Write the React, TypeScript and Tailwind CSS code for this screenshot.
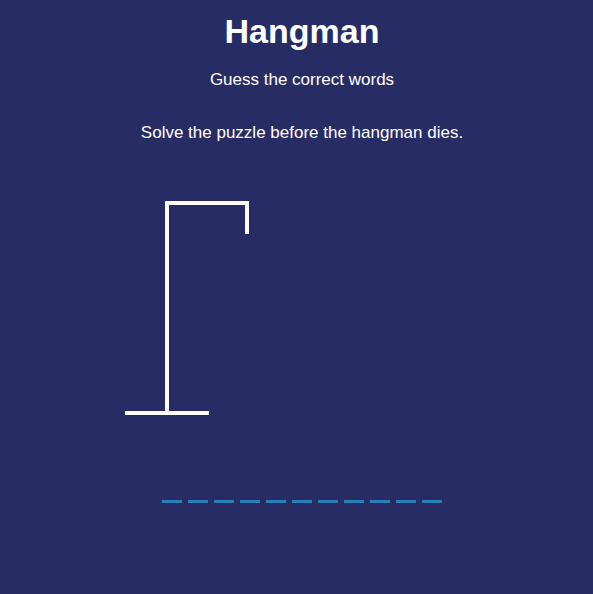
export default function App() {
  const letters = Array.from({ length: 11 });
  return (
    <div
      className="w-full h-[594px] overflow-hidden bg-[#282c65] text-white flex flex-col items-center pl-[11px]"
      style={{ fontFamily: '"Liberation Sans", Arial, sans-serif' }}
    >
      <h1 className="mt-[12px] text-[34px] leading-[38px] font-bold">Hangman</h1>
      <p className="mt-[20px] text-[17px] leading-[19px]">Guess the correct words</p>
      <p className="mt-[34px] text-[17px] leading-[19px]">Solve the puzzle before the hangman dies.</p>
      <div className="mt-[41px] w-[450px] px-[30px] flex flex-col">
        <svg width="200" height="250" className="block" fill="none" stroke="#ffffff" strokeWidth={4} strokeLinecap="butt">
          <line x1="58" y1="20" x2="142" y2="20" />
          <line x1="140" y1="18" x2="140" y2="51" />
          <line x1="60" y1="18" x2="60" y2="230" />
          <line x1="18" y1="230" x2="102" y2="230" />
        </svg>
        <div className="mt-[20px] ml-[-30px] w-[450px] flex justify-center">
          {letters.map((_, i) => (
            <span key={i} className="mx-[3px] w-[20px] h-[50px] border-b-[3px] border-[#2980b9] inline-flex" />
          ))}
        </div>
      </div>
    </div>
  );
}
